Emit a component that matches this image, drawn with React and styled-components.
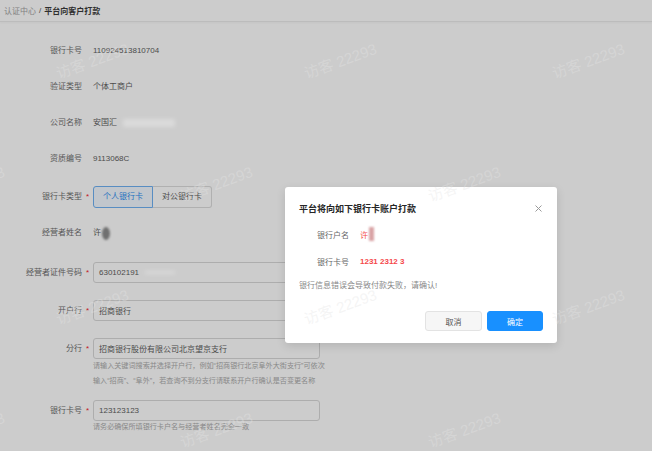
import styled, { createGlobalStyle } from "styled-components";

const GlobalStyle = createGlobalStyle`
  html, body {
    margin: 0;
    background: #fff;
  }
  body {
    font-family: "Liberation Sans", "Noto Sans CJK SC", sans-serif;
  }
  * {
    box-sizing: border-box;
  }
`;

const marks = [];
for (let row = 0; row < 4; row++) {
  for (let col = 0; col < 4; col++) {
    const x = (row % 2 === 0 ? 92 : -32) + col * 248;
    const y = 60 + row * 123;
    if (x < 700) marks.push({ x, y });
  }
}

function App() {
  return (
    <Screen>
      <GlobalStyle />
      <Header>
        <Crumb>认证中心</Crumb>
        <Sep>/</Sep>
        <Current>平台向客户打款</Current>
      </Header>

      <Form>
        <Item>
          <Label>银行卡号</Label>
          <Req />
          <Value>110924513810704</Value>
        </Item>
        <Item $mt={14}>
          <Label>验证类型</Label>
          <Req />
          <Value>个体工商户</Value>
        </Item>
        <Item $mt={14}>
          <Label>公司名称</Label>
          <Req />
          <Value>
            安国汇<Smudge $w={52} $h={8} />
          </Value>
        </Item>
        <Item $mt={14}>
          <Label>资质编号</Label>
          <Req />
          <Value>9113068C</Value>
        </Item>
        <Item $mt={16}>
          <Label>银行卡类型</Label>
          <Req>*</Req>
          <RadioGroup>
            <RadioButton $active>个人银行卡</RadioButton>
            <RadioButton>对公银行卡</RadioButton>
          </RadioGroup>
        </Item>
        <Item $mt={14}>
          <Label>经营者姓名</Label>
          <Req />
          <Value>
            许<Blob />
          </Value>
        </Item>
        <Item $mt={18}>
          <Label $h={21}>经营者证件号码</Label>
          <Req $h={21}>*</Req>
          <Input>
            630102191<Smudge $w={30} $h={3} />
          </Input>
        </Item>
        <Item $mt={17}>
          <Label $h={21}>开户行</Label>
          <Req $h={21}>*</Req>
          <Input>招商银行</Input>
        </Item>
        <Item $mt={17}>
          <Label $h={21}>分行</Label>
          <Req $h={21}>*</Req>
          <Control>
            <Input>招商银行股份有限公司北京望京支行</Input>
            <Help $lh={15}>
              请输入关键词搜索并选择开户行，例如“招商银行北京阜外大街支行”可依次
              <br />
              输入“招商”、“阜外”，若查询不到分支行请联系开户行确认是否变更名称
            </Help>
          </Control>
        </Item>
        <Item $mt={11}>
          <Label $h={21}>银行卡号</Label>
          <Req $h={21}>*</Req>
          <Control>
            <Input>123123123</Input>
            <Help $lh={12}>请务必确保所填银行卡户名与经营者姓名完全一致</Help>
          </Control>
        </Item>
      </Form>

      <Mask />

      <Modal>
        <ModalHeader>
          <Title>平台将向如下银行卡账户打款</Title>
          <Close>
            <svg width="7" height="7" viewBox="0 0 7 7">
              <path
                d="M0.5 0.5 L6.5 6.5 M6.5 0.5 L0.5 6.5"
                stroke="#9a9a9a"
                strokeWidth="1"
                fill="none"
              />
            </svg>
          </Close>
        </ModalHeader>
        <InfoRow $mt={12}>
          <InfoLabel>银行户名</InfoLabel>
          <InfoValue>
            许<PinkBlob />
          </InfoValue>
        </InfoRow>
        <InfoRow $mt={13}>
          <InfoLabel>银行卡号</InfoLabel>
          <InfoValue $bold>1231 2312 3</InfoValue>
        </InfoRow>
        <Warning>银行信息错误会导致付款失败，请确认!</Warning>
        <Footer>
          <Button>取消</Button>
          <Button $primary>确定</Button>
        </Footer>
      </Modal>

      <WatermarkLayer>
        {marks.map((m, i) => (
          <Watermark key={i} style={{ left: m.x, top: m.y }}>
            访客 22293
          </Watermark>
        ))}
      </WatermarkLayer>
    </Screen>
  );
}

export default App;

const Screen = styled.div`
  position: relative;
  width: 652px;
  height: 451px;
  overflow: hidden;
  background: #fff;
`;

const Header = styled.div`
  height: 22px;
  padding: 0 4px;
  display: flex;
  align-items: center;
  font-size: 8px;
  border-bottom: 1px solid #ececec;
  box-shadow: 0 1px 2px rgba(0, 0, 0, 0.04);
`;

const Crumb = styled.span`
  color: #a3a3a3;
`;

const Sep = styled.span`
  color: #555;
  margin: 0 3px;
`;

const Current = styled.span`
  color: #3a3a3a;
  font-weight: bold;
`;

const Form = styled.div`
  display: flex;
  flex-direction: column;
  padding-top: 18px;
`;

const Item = styled.div`
  display: flex;
  align-items: flex-start;
  margin-top: ${(p) => p.$mt || 0}px;
`;

const Label = styled.div`
  width: 82px;
  flex-shrink: 0;
  text-align: right;
  font-size: 8px;
  line-height: ${(p) => p.$h || 22}px;
  color: #6e6e6e;
  white-space: nowrap;
`;

const Req = styled.span`
  width: 11px;
  flex-shrink: 0;
  text-align: center;
  font-size: 8px;
  line-height: ${(p) => p.$h || 22}px;
  color: #f5222d;
`;

const Value = styled.div`
  display: flex;
  align-items: center;
  font-size: 8px;
  line-height: 22px;
  height: 22px;
  color: #5e5e5e;
`;

const Smudge = styled.span`
  position: relative;
  z-index: 11;
  display: inline-block;
  width: ${(p) => p.$w}px;
  height: ${(p) => p.$h}px;
  margin-left: 6px;
  background: rgba(255, 255, 255, 0.3);
  filter: blur(2px);
`;

const Blob = styled.span`
  display: inline-block;
  width: 8px;
  height: 13px;
  margin-left: 1px;
  border-radius: 50%;
  background: #8c8c8c;
  filter: blur(1.2px);
`;

const RadioGroup = styled.div`
  display: flex;
`;

const RadioButton = styled.div`
  height: 22px;
  padding: 0 9px;
  font-size: 8px;
  line-height: 20px;
  white-space: nowrap;
  border: 1px solid ${(p) => (p.$active ? "#6fb1f3" : "#dcdcdc")};
  color: ${(p) => (p.$active ? "#2a8cf0" : "#5c5c5c")};
  background: ${(p) => (p.$active ? "#f2f8ff" : "#fff")};

  &:first-child {
    border-radius: 3px 0 0 3px;
  }
  &:last-child {
    border-left: none;
    border-radius: 0 3px 3px 0;
  }
`;

const Control = styled.div`
  display: flex;
  flex-direction: column;
`;

const Input = styled.div`
  display: flex;
  align-items: center;
  width: 227px;
  height: 21px;
  padding: 0 5px;
  border: 1px solid #d9d9d9;
  border-radius: 3px;
  background: #fff;
  font-size: 8px;
  color: #5e5e5e;
  white-space: nowrap;
`;

const Help = styled.div`
  font-size: 7.1px;
  line-height: ${(p) => p.$lh}px;
  color: #ababab;
  white-space: nowrap;
`;

const Mask = styled.div`
  position: absolute;
  inset: 0;
  z-index: 10;
  background: rgba(0, 0, 0, 0.2);
`;

const Modal = styled.div`
  position: absolute;
  left: 285px;
  top: 187px;
  z-index: 20;
  width: 272px;
  height: 156px;
  padding: 14px 14px 12px;
  display: flex;
  flex-direction: column;
  background: #fff;
  border-radius: 3px;
  box-shadow: 0 3px 10px rgba(0, 0, 0, 0.12);
`;

const ModalHeader = styled.div`
  display: flex;
  align-items: center;
  justify-content: space-between;
  height: 14px;
`;

const Title = styled.div`
  font-size: 9px;
  font-weight: bold;
  color: #262626;
`;

const Close = styled.div`
  width: 10px;
  display: flex;
  justify-content: center;
  align-items: center;
`;

const InfoRow = styled.div`
  display: flex;
  align-items: center;
  height: 14px;
  padding-left: 18px;
  margin-top: ${(p) => p.$mt}px;
  font-size: 8px;
`;

const InfoLabel = styled.span`
  width: 32px;
  margin-right: 11px;
  color: #666;
  white-space: nowrap;
`;

const InfoValue = styled.span`
  display: flex;
  align-items: center;
  color: #f5474a;
  font-weight: ${(p) => (p.$bold ? "bold" : "normal")};
`;

const PinkBlob = styled.span`
  display: inline-block;
  width: 5px;
  height: 14px;
  margin-left: 1px;
  background: #d9a3a5;
  filter: blur(0.8px);
`;

const Warning = styled.div`
  margin-top: 11px;
  height: 14px;
  line-height: 14px;
  font-size: 8px;
  color: #888;
`;

const Footer = styled.div`
  display: flex;
  justify-content: flex-end;
  gap: 5px;
  margin-top: 18px;
`;

const Button = styled.div`
  width: ${(p) => (p.$primary ? 56 : 57)}px;
  height: 20px;
  display: flex;
  align-items: center;
  justify-content: center;
  font-size: 8px;
  border-radius: 3px;
  border: 1px solid ${(p) => (p.$primary ? "#1890ff" : "#e3e3e3")};
  background: ${(p) => (p.$primary ? "#1890ff" : "#f6f6f6")};
  color: ${(p) => (p.$primary ? "#fff" : "#555")};
`;

const WatermarkLayer = styled.div`
  position: absolute;
  inset: 0;
  z-index: 30;
  pointer-events: none;
`;

const Watermark = styled.span`
  position: absolute;
  transform: translate(-50%, -50%) rotate(-20deg);
  font-size: 15px;
  white-space: nowrap;
  color: rgba(228, 228, 228, 0.38);
`;
